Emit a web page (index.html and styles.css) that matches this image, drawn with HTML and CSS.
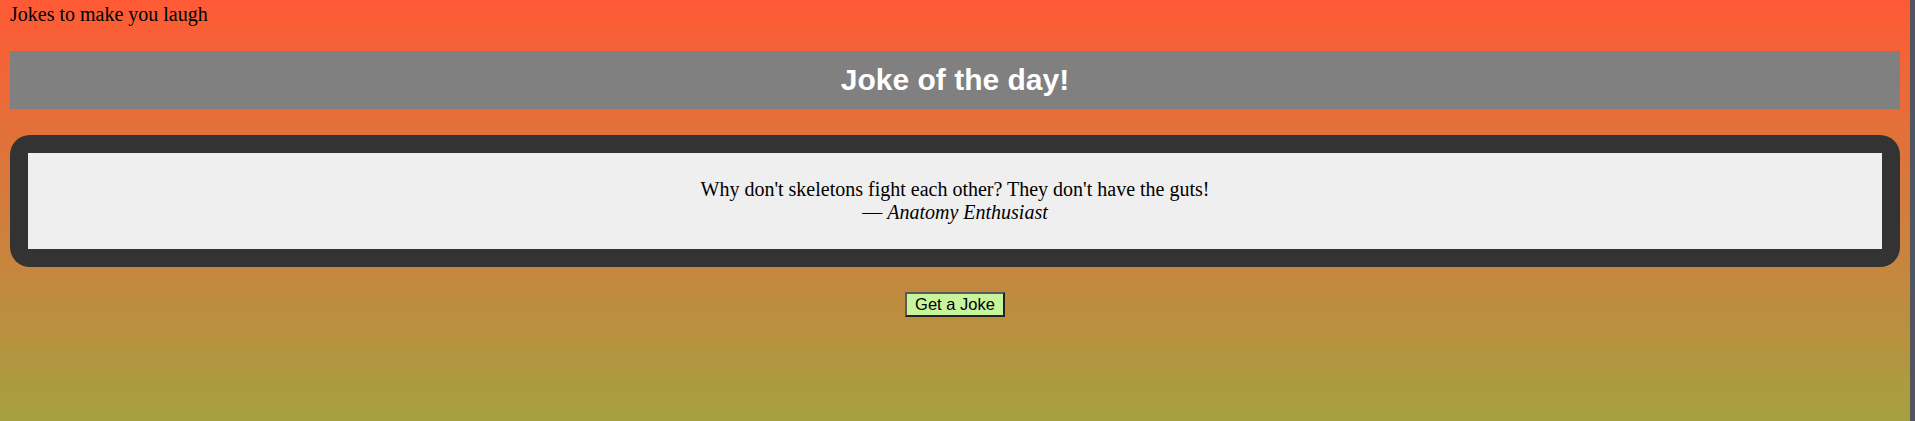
FILE: index.html
```html
<!DOCTYPE html>
<html lang="en">
<head>
<meta charset="utf-8">
<title>Jokes</title>
<link rel="stylesheet" href="styles.css">
</head>
<body>
  <div class="tagline">Jokes to make you laugh</div>
  <h1 class="banner">Joke of the day!</h1>
  <section class="card">
    <div class="card-inner">
      <p class="joke">Why don't skeletons fight each other? They don't have the guts!</p>
      <p class="author">— <em>Anatomy Enthusiast</em></p>
    </div>
  </section>
  <div class="actions">
    <button class="joke-btn" type="button">Get a Joke</button>
  </div>
</body>
</html>
```

FILE: styles.css
```css
html {
  height: 100%;
  box-sizing: border-box;
  background: linear-gradient(to bottom, #ff5a35 0px, #a5a042 421px);
  border-right: 5px solid #52555c;
}

body {
  margin: 0 10px;
  padding-top: 3px;
  font-family: "Liberation Serif", "Times New Roman", serif;
  font-size: 20px;
  color: #000;
}

.tagline {
  line-height: 23px;
}

.banner {
  margin: 25px 0 0;
  padding: 12px 0;
  background: #808080;
  color: #fff;
  font-family: "Liberation Sans", Arial, sans-serif;
  font-weight: bold;
  font-size: 30px;
  line-height: 34px;
  text-align: center;
}

.card {
  margin-top: 26px;
  background: #333333;
  border-radius: 20px;
  padding: 18px;
}

.card-inner {
  background: #efefef;
  padding: 25px;
  text-align: center;
  line-height: 23px;
}

.joke,
.author {
  margin: 0;
}

.actions {
  margin-top: 25px;
  text-align: center;
}

.joke-btn {
  font-family: "Liberation Sans", Arial, sans-serif;
  font-size: 16.5px;
  height: 25px;
  width: 100px;
  padding: 0;
  background: #c8f59c;
  color: #000;
  border-style: solid;
  border-width: 2px;
  border-color: #5a5a5a #222 #222 #5a5a5a;
}
```
